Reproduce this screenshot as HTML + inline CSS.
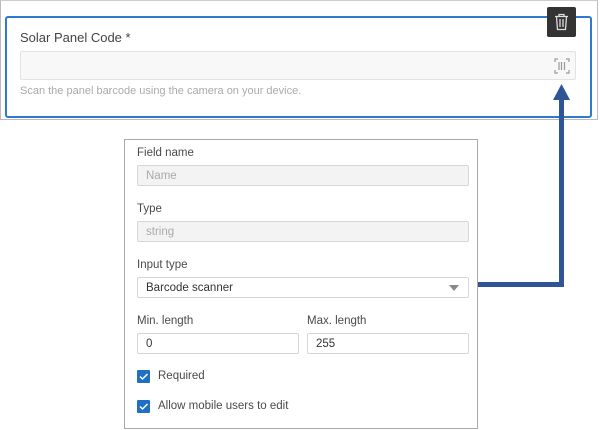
<!DOCTYPE html>
<html><head><style>
*{box-sizing:border-box;margin:0;padding:0}
body{width:600px;height:430px;background:#fff;position:relative;font-family:"Liberation Sans",sans-serif;overflow:hidden}
.a{position:absolute}
.lbl{font-size:11.5px;color:#4a4a4a}
.inp{border:1px solid #d6d6d6;border-radius:2px;font-size:11.5px;padding-left:8px;display:flex;align-items:center}
.dis{background:#f3f3f3;color:#aaa}
.cb{width:13px;height:13px;background:#1f6fc5;border-radius:1px}
</style></head><body>
<div class="a" style="left:0;top:0;width:598px;height:120px;border:1px solid #bbb;border-top-color:#ccc"></div>
<div class="a" style="left:5px;top:16px;width:587px;height:102px;border:2px solid #2f7ad0;border-radius:3px"></div>
<div class="a" style="left:20px;top:30px;font-size:13px;color:#444">Solar Panel Code *</div>
<div class="a" style="left:20px;top:51px;width:556px;height:29px;border:1px solid #e2e2e2;background:#f8f8f8;border-radius:2px"></div>
<svg class="a" style="left:554px;top:58px" width="16" height="16" viewBox="0 0 16 16" fill="none" stroke="#999" stroke-width="1.2"><path d="M1 4V1h3M12 1h3v3M15 12v3h-3M4 15H1v-3"/><path d="M5 4v8M7.5 4v8M10.5 4v8"/></svg>
<div class="a" style="left:20px;top:85px;font-size:11px;color:#aaa">Scan the panel barcode using the camera on your device.</div>
<div class="a" style="left:547px;top:7px;width:29px;height:30px;background:#333;border-radius:2px"></div>
<svg class="a" style="left:554px;top:13px" width="15" height="18" viewBox="0 0 15 18" fill="none" stroke="#ddd" stroke-width="1.3"><path d="M1 3.5h13M5 3.5V1.5h5v2M2.5 3.5l1 13h8l1-13M6 6v8M9 6v8"/></svg>
<div class="a" style="left:559px;top:98px;width:5px;height:188px;background:#2f5597"></div>
<div class="a" style="left:477px;top:282px;width:87px;height:5px;background:#2f5597"></div>
<svg class="a" style="left:553px;top:84px" width="17" height="16"><path d="M8.5 0L17 16H0z" fill="#2f5597"/></svg>
<div class="a" style="left:124px;top:139px;width:354px;height:290px;border:1px solid #aaa"></div>
<div class="a lbl" style="left:137px;top:147px">Field name</div>
<div class="a inp dis" style="left:137px;top:165px;width:332px;height:21px">Name</div>
<div class="a lbl" style="left:137px;top:203px">Type</div>
<div class="a inp dis" style="left:137px;top:221px;width:332px;height:21px">string</div>
<div class="a lbl" style="left:137px;top:259px">Input type</div>
<div class="a inp" style="left:137px;top:277px;width:332px;height:21px;color:#333">Barcode scanner</div>
<svg class="a" style="left:449px;top:285px" width="10" height="6"><path d="M0 0h10L5 6z" fill="#888"/></svg>
<div class="a lbl" style="left:137px;top:315px">Min. length</div>
<div class="a lbl" style="left:307px;top:315px">Max. length</div>
<div class="a inp" style="left:137px;top:333px;width:162px;height:21px;color:#333">0</div>
<div class="a inp" style="left:307px;top:333px;width:162px;height:21px;color:#333">255</div>
<div class="a cb" style="left:137px;top:370px"></div>
<svg class="a" style="left:137px;top:370px" width="13" height="13"><path d="M3 6.5l2.5 2.5L10.5 4" stroke="#fff" stroke-width="1.5" fill="none"/></svg>
<div class="a lbl" style="left:158px;top:370px">Required</div>
<div class="a cb" style="left:137px;top:400px"></div>
<svg class="a" style="left:137px;top:400px" width="13" height="13"><path d="M3 6.5l2.5 2.5L10.5 4" stroke="#fff" stroke-width="1.5" fill="none"/></svg>
<div class="a lbl" style="left:158px;top:400px">Allow mobile users to edit</div>
</body></html>
